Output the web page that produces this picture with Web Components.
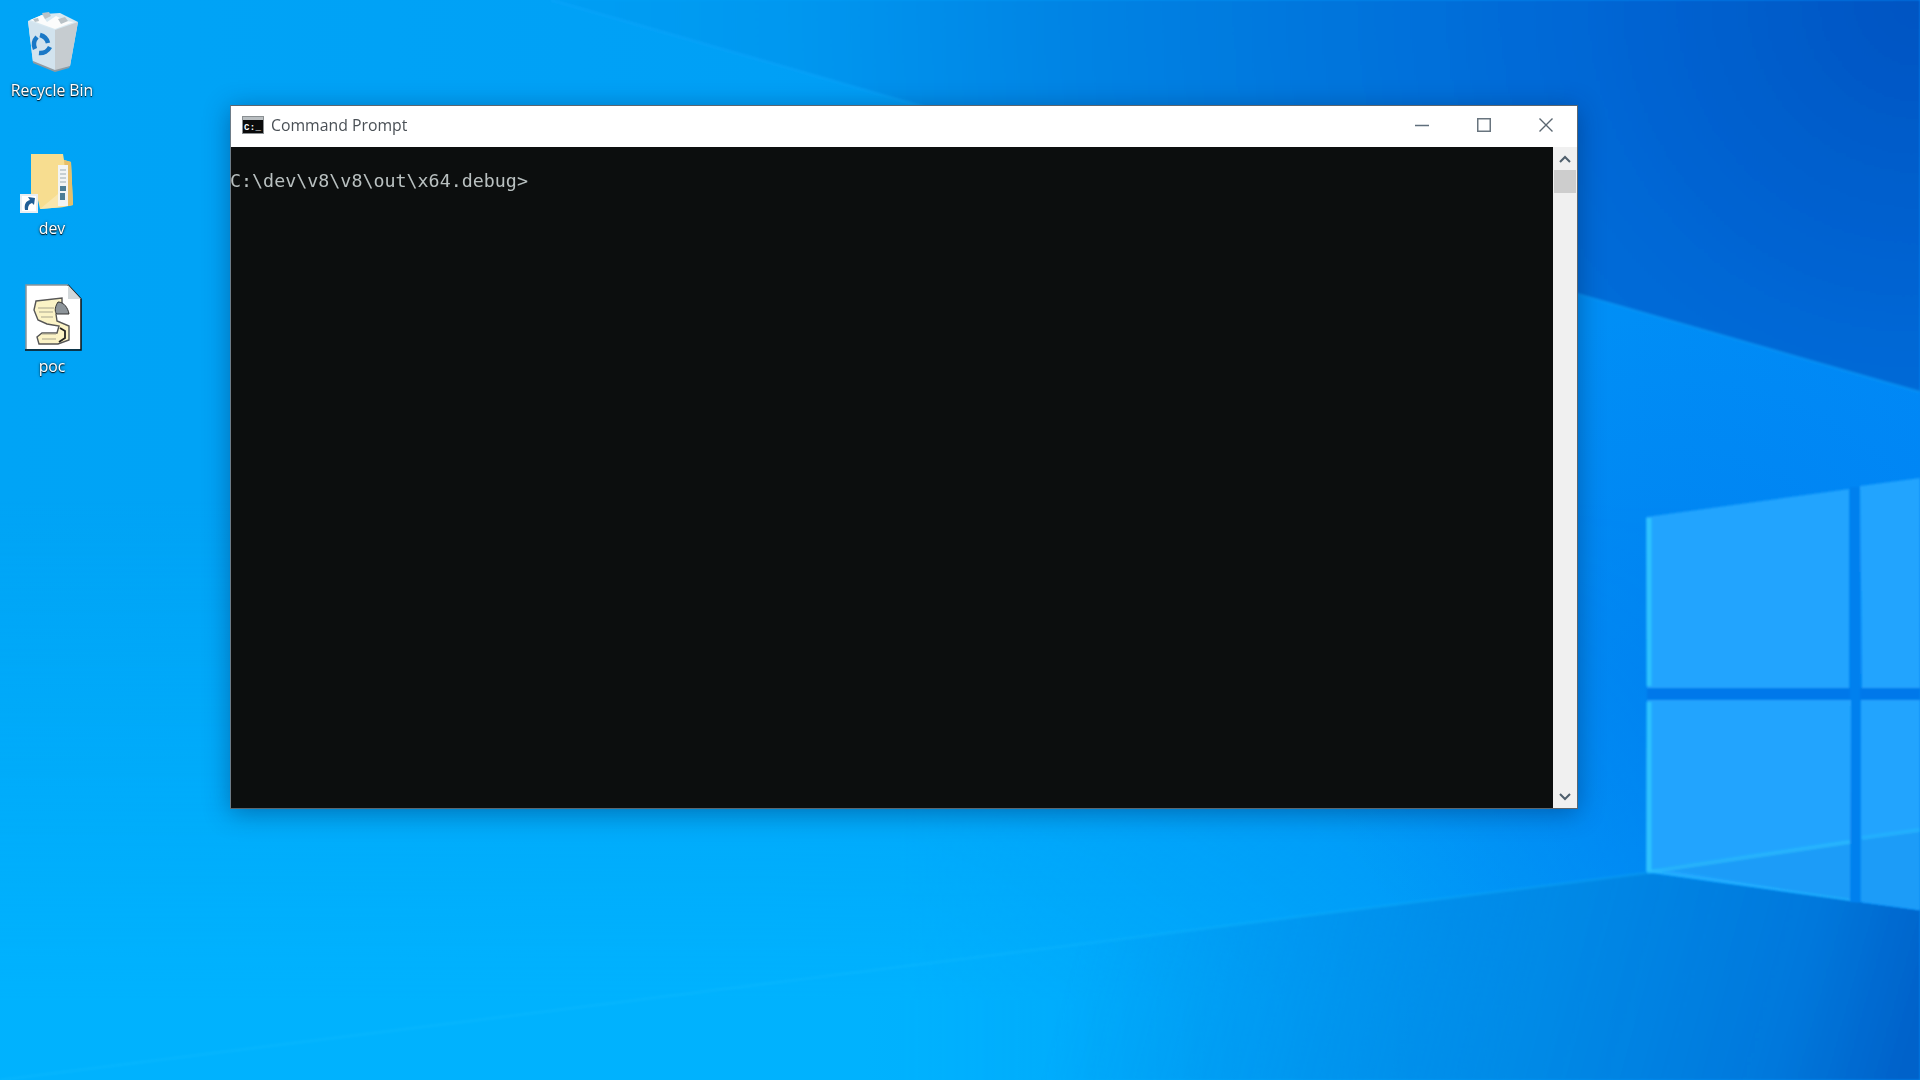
<!DOCTYPE html>
<html lang="en">
<head>
<meta charset="utf-8">
<title>Command Prompt</title>
<style>
    html, body { margin: 0; height: 100%; overflow: hidden; background: #0090ee; }
</style>
</head>
<body>
<win-desktop>
    <desktop-icon slot="icons" label="Recycle Bin">
        <svg width="104" height="80" viewBox="0 0 104 80">
            <path d="M28 21 L44 14 L60 13 L78 22 L70 66 L55 71 L33 62 Z" fill="#e9eef0" opacity=".92"/>
            <path d="M28 21 L55 30 L55 71 L33 62 Z" fill="#d2e3ee"/>
            <path d="M55 30 L78 22 L70 66 L55 71 Z" fill="#c6ccd0"/>
            <path d="M30 20 L42 15 L47 22 L56 16 L66 21 L74 22 L55 29 Z" fill="#fbfcfc"/>
            <path d="M42 13 l7 -1 l2 4 l-6 3 Z M58 19 l7 -2 l3 4 l-7 3 Z M33 19 l5 -1 l1 3 l-4 1 Z" fill="#b9c2c7"/>
            <path d="M33 61 L55 70 L70 66 L69 68 L55 72 L33 63 Z" fill="#8f9aa2"/>
            <g fill="none" stroke="#1a78c6" stroke-width="4.5">
                <path d="M35 49 a11 11 0 0 1 2 -12"/>
                <path d="M40 35 a11 11 0 0 1 8 8"/>
                <path d="M50 47 a11 11 0 0 1 -11 6"/>
            </g>
        </svg>
    </desktop-icon>
    <desktop-icon slot="icons" label="dev">
        <svg width="104" height="80" viewBox="0 -12 104 80">
            <path d="M31 4 L63 4 L64 10 L71 12 L73 55 L64 57 L40 59 L38 50 L31 48 Z" fill="#f7dd90"/>
            <path d="M64 10 L71 12 L73 55 L68 56 Z" fill="#e6bf6a"/>
            <path d="M58 15 L68 15 L68 56 L58 56 Z" fill="#f2f4f4"/>
            <path d="M60 20 h6 M60 24 h6 M60 28 h6 M60 32 h6" stroke="#b8c2c8" stroke-width="1.5"/>
            <path d="M60 36 h6 v5 h-6 Z M60 43 h5 v7 h-5 Z" fill="#4c7d95"/>
            <path d="M40 59 L64 57 L58 56 L58 44 L46 54 Z" fill="#f9e6ae"/>
            <rect x="20" y="44" width="18" height="19" fill="#e8eef2"/>
            <rect x="22" y="46" width="14" height="15" fill="#fff"/>
            <path d="M25 60 C24 54 26 51 30 50 L28 47 L35 48 L34 55 L32 53 C29 54 28 56 28 60 Z" fill="#1f5e96"/>
        </svg>
    </desktop-icon>
    <desktop-icon slot="icons" label="poc">
        <svg width="104" height="80" viewBox="0 -8 104 80">
            <path d="M26 1 L68 1 L81 15 L81 65 L26 65 Z" fill="#fff"/>
            <path d="M26 65 L26 1 L68 1" fill="none" stroke="#8b9499" stroke-width="1.5"/>
            <path d="M68 1 L81 15 L81 66 L25 66" fill="none" stroke="#111" stroke-width="1.5"/>
            <path d="M68 1 L68 15 L81 15 Z" fill="#d3d8da"/>
            <path d="M36 17 L62 14 L62 22 L56 30 L57 37 L69 42 L69 56 L58 60 L39 60 L37 53 L42 49 L57 49 L59 42 L47 40 L38 36 L34 26 Z" fill="#fbf3c6" stroke="#555" stroke-width="1.4"/>
            <path d="M58 18 C54 24 55 29 57 30 L69 30 C68 24 64 18 58 18 Z" fill="#8d9499" stroke="#333"/>
            <path d="M38 24 H54 M39 28 H53 M41 33 H53 M42 50 H56 M42 55 H56" stroke="#a9a68e" stroke-width="1.2"/>
            <path d="M60 44 L65 47 L65 54 L59 58" fill="none" stroke="#222" stroke-width="1.8"/>
        </svg>
    </desktop-icon>

    <console-window slot="windows" title="Command Prompt">C:\dev\v8\v8\out\x64.debug&gt;</console-window>
</win-desktop>

<script>
// wallpaper + free canvas for the icons and the window
class WinDesktop extends HTMLElement {
    connectedCallback() {
        this.attachShadow({ mode: 'open' });
        this.shadowRoot.innerHTML = `
            <style>
                :host {
                    display: block;
                    position: relative;
                    width: 1920px;
                    height: 1080px;
                    overflow: hidden;
                }
                svg.wall {
                    position: absolute;
                    inset: 0;
                }
                .icons {
                    position: absolute;
                    left: 0;
                    top: 0;
                    display: flex;
                    flex-direction: column;
                    gap: 38px;
                }
                ::slotted([slot="windows"]) {
                    position: absolute;
                    left: 230px;
                    top: 105px;
                }
            </style>
            <svg class="wall" width="1920" height="1080" viewBox="0 0 1920 1080">
                <defs>
                    <linearGradient id="base" x1="0" y1="0" x2="1" y2="0">
                        <stop offset="0" stop-color="#00a4f6"/>
                        <stop offset=".4" stop-color="#00a0f6"/>
                        <stop offset=".75" stop-color="#0092f6"/>
                        <stop offset="1" stop-color="#0088f6"/>
                    </linearGradient>
                    <linearGradient id="lift" x1="0" y1="500" x2="0" y2="1000" gradientUnits="userSpaceOnUse">
                        <stop offset="0" stop-color="#00b4ff" stop-opacity="0"/>
                        <stop offset="1" stop-color="#00b4ff" stop-opacity=".9"/>
                    </linearGradient>
                    <linearGradient id="liftx" x1="900" y1="0" x2="1640" y2="0" gradientUnits="userSpaceOnUse">
                        <stop offset="0" stop-color="#fff"/>
                        <stop offset="1" stop-color="#222"/>
                    </linearGradient>
                    <mask id="liftmask"><rect width="1920" height="1080" fill="url(#liftx)"/></mask>
                    <radialGradient id="sky" cx="1920" cy="0" r="1420" gradientUnits="userSpaceOnUse">
                        <stop offset="0" stop-color="#0054c2"/>
                        <stop offset=".25" stop-color="#0068d6"/>
                        <stop offset=".6" stop-color="#0084e4"/>
                        <stop offset=".8" stop-color="#0098f0"/>
                        <stop offset="1" stop-color="#00a0f5"/>
                    </radialGradient>
                    <linearGradient id="floor" x1="1100" y1="860" x2="1900" y2="1080" gradientUnits="userSpaceOnUse">
                        <stop offset="0" stop-color="#0088e4" stop-opacity="0"/>
                        <stop offset=".55" stop-color="#0088e4" stop-opacity=".85"/>
                        <stop offset=".85" stop-color="#0078dc"/>
                        <stop offset="1" stop-color="#0062ca"/>
                    </linearGradient>
                    <radialGradient id="glow" cx="1700" cy="690" r="380" gradientUnits="userSpaceOnUse">
                        <stop offset="0" stop-color="#0070e8" stop-opacity=".4"/>
                        <stop offset="1" stop-color="#0070e8" stop-opacity="0"/>
                    </radialGradient>
                    <filter id="soft"><feGaussianBlur stdDeviation="1.2"/></filter>
                </defs>
                <rect width="1920" height="1080" fill="url(#base)"/>
                <rect y="500" width="1920" height="580" fill="url(#lift)" mask="url(#liftmask)"/>
                <rect x="1280" y="280" width="640" height="800" fill="url(#glow)"/>
                <path d="M551 0 L1920 0 L1920 392 Z" fill="url(#sky)" filter="url(#soft)"/>
                <path d="M551 0 L1920 392" stroke="#12a8ff" stroke-width="3" opacity=".35" filter="url(#soft)"/>
                <path d="M0 1080 L1647 873 L1920 910 L1920 1080 Z" fill="url(#floor)" filter="url(#soft)"/>
                <path d="M0 1080 L1647 873" stroke="#20c4ff" stroke-width="3" opacity=".18" filter="url(#soft)"/>
                <g filter="url(#soft)">
                    <rect x="1647" y="688" width="273" height="12" fill="#0078ea"/>
                    <rect x="1850" y="487" width="10" height="415" fill="#0080ee"/>
                    <path d="M1646 517 L1849 489 L1849 688 L1647 688 Z" fill="#20a4fe"/>
                    <path d="M1647 700 L1851 700 L1850 900 L1646 872 Z" fill="#20a4fe"/>
                    <path d="M1860 486 L1920 478 L1920 688 L1862 688 Z" fill="#20a4fe"/>
                    <path d="M1861 700 L1920 700 L1920 910 L1861 902 Z" fill="#20a4fe"/>
                    <path d="M1657 868 L1850 843 L1850 900 Z M1861 839 L1920 831 L1920 910 L1861 902 Z" fill="#1f9cf8"/>
                    <path d="M1649 518 L1649 686 M1649 702 L1649 871" stroke="#33cdff" stroke-width="5" opacity=".75"/>
                    <path d="M1647 872 L1850 842" stroke="#2cc4ff" stroke-width="4" opacity=".55"/>
                    <path d="M1647 871 L1850 900" stroke="#2cc4ff" stroke-width="2" opacity=".5"/>
                    <path d="M1862 838 L1920 830" stroke="#2cc4ff" stroke-width="4" opacity=".4"/>
                </g>
            </svg>
            <div class="icons"><slot name="icons"></slot></div>
            <slot name="windows"></slot>
        `;
    }
}

class DesktopIcon extends HTMLElement {
    connectedCallback() {
        this.attachShadow({ mode: 'open' });
        this.shadowRoot.innerHTML = `
            <style>
                :host {
                    display: flex;
                    flex-direction: column;
                    align-items: center;
                    width: 104px;
                }
                ::slotted(svg) {
                    filter: blur(0.5px);
                }
                .label {
                    font: 15.8px "Open Sans", sans-serif;
                    line-height: 20px;
                    color: #fff;
                    filter: blur(0.3px);
                    text-shadow: 0 1px 1px rgba(0, 0, 0, 0.9), 0 0 3px rgba(0, 0, 0, 0.7);
                }
            </style>
            <slot></slot>
            <div class="label">${this.getAttribute('label')}</div>
        `;
    }
}

class ConsoleWindow extends HTMLElement {
    connectedCallback() {
        this.attachShadow({ mode: 'open' });
        const title = this.getAttribute('title');
        this.removeAttribute('title');
        this.shadowRoot.innerHTML = `
            <style>
                :host {
                    display: flex;
                    flex-direction: column;
                    width: 1348px;
                    height: 704px;
                    box-sizing: border-box;
                    background: #fff;
                    border: 1px solid #5b6670;
                    border-left-color: #6d7c88;
                    box-shadow: 0 4px 24px rgba(0, 40, 90, 0.45);
                }
                .titlebar {
                    display: flex;
                    align-items: center;
                    height: 41px;
                    box-sizing: border-box;
                    flex: none;
                    padding: 0 0 3px 11px;
                }
                .title {
                    flex: 1;
                    margin-left: 7px;
                    font: 15.8px "Open Sans", sans-serif;
                    color: #4a5056;
                    filter: blur(0.3px);
                }
                .ctl {
                    width: 62px;
                    height: 38px;
                    flex: none;
                    display: flex;
                    align-items: center;
                    justify-content: center;
                }
                .body {
                    flex: 1;
                    display: flex;
                    min-height: 0;
                }
                .term {
                    flex: 1;
                    background: #0c0e0e;
                    color: #b9c0c0;
                    font: 18.33px/20px "DejaVu Sans Mono", monospace;
                    padding-top: 24px;
                    white-space: pre;
                }
                .term span {
                    display: inline-block;
                    margin-left: -1px;
                    filter: blur(0.4px);
                }
            </style>
            <div class="titlebar">
                <svg width="22" height="18" viewBox="0 0 22 18">
                    <rect x=".5" y=".5" width="21" height="17" fill="#0b0b0b" stroke="#8a8f92"/>
                    <rect x="1" y="1" width="20" height="3" fill="#b9bec1"/>
                    <text x="2" y="13.5" font-family="Liberation Mono" font-weight="700" font-size="9" fill="#fff" textLength="17">C:\_</text>
                </svg>
                <div class="title">${title}</div>
                <div class="ctl">
                    <svg width="14" height="14" viewBox="0 0 14 14"><path d="M0 7.5 H14" stroke="#5f6f7c" stroke-width="1.5"/></svg>
                </div>
                <div class="ctl">
                    <svg width="14" height="14" viewBox="0 0 14 14"><rect x=".75" y=".75" width="12.5" height="12.5" fill="none" stroke="#68747e" stroke-width="1.5"/></svg>
                </div>
                <div class="ctl">
                    <svg width="14" height="14" viewBox="0 0 14 14"><path d="M.5 .5 L13.5 13.5 M13.5 .5 L.5 13.5" stroke="#5a6670" stroke-width="1.4"/></svg>
                </div>
            </div>
            <div class="body">
                <div class="term"><span><slot></slot></span></div>
                <window-scrollbar></window-scrollbar>
            </div>
        `;
    }
}

class WindowScrollbar extends HTMLElement {
    connectedCallback() {
        this.attachShadow({ mode: 'open' });
        this.shadowRoot.innerHTML = `
            <style>
                :host {
                    display: flex;
                    flex-direction: column;
                    width: 24px;
                    flex: none;
                    background: #f0f0f0;
                }
                .arrow {
                    height: 23px;
                    display: flex;
                    align-items: center;
                    justify-content: center;
                    flex: none;
                }
                .thumb {
                    height: 23px;
                    background: #cdcdcd;
                    margin: 0 1px;
                    flex: none;
                }
                .track { flex: 1; }
            </style>
            <div class="arrow">
                <svg width="12" height="8" viewBox="0 0 12 8"><path d="M1 7 L6 2 L11 7" fill="none" stroke="#4f5f6c" stroke-width="2"/></svg>
            </div>
            <div class="thumb"></div>
            <div class="track"></div>
            <div class="arrow">
                <svg width="12" height="8" viewBox="0 0 12 8"><path d="M1 1 L6 6 L11 1" fill="none" stroke="#4f5f6c" stroke-width="2"/></svg>
            </div>
        `;
    }
}

customElements.define('win-desktop', WinDesktop);
customElements.define('desktop-icon', DesktopIcon);
customElements.define('console-window', ConsoleWindow);
customElements.define('window-scrollbar', WindowScrollbar);
</script>
</body>
</html>
